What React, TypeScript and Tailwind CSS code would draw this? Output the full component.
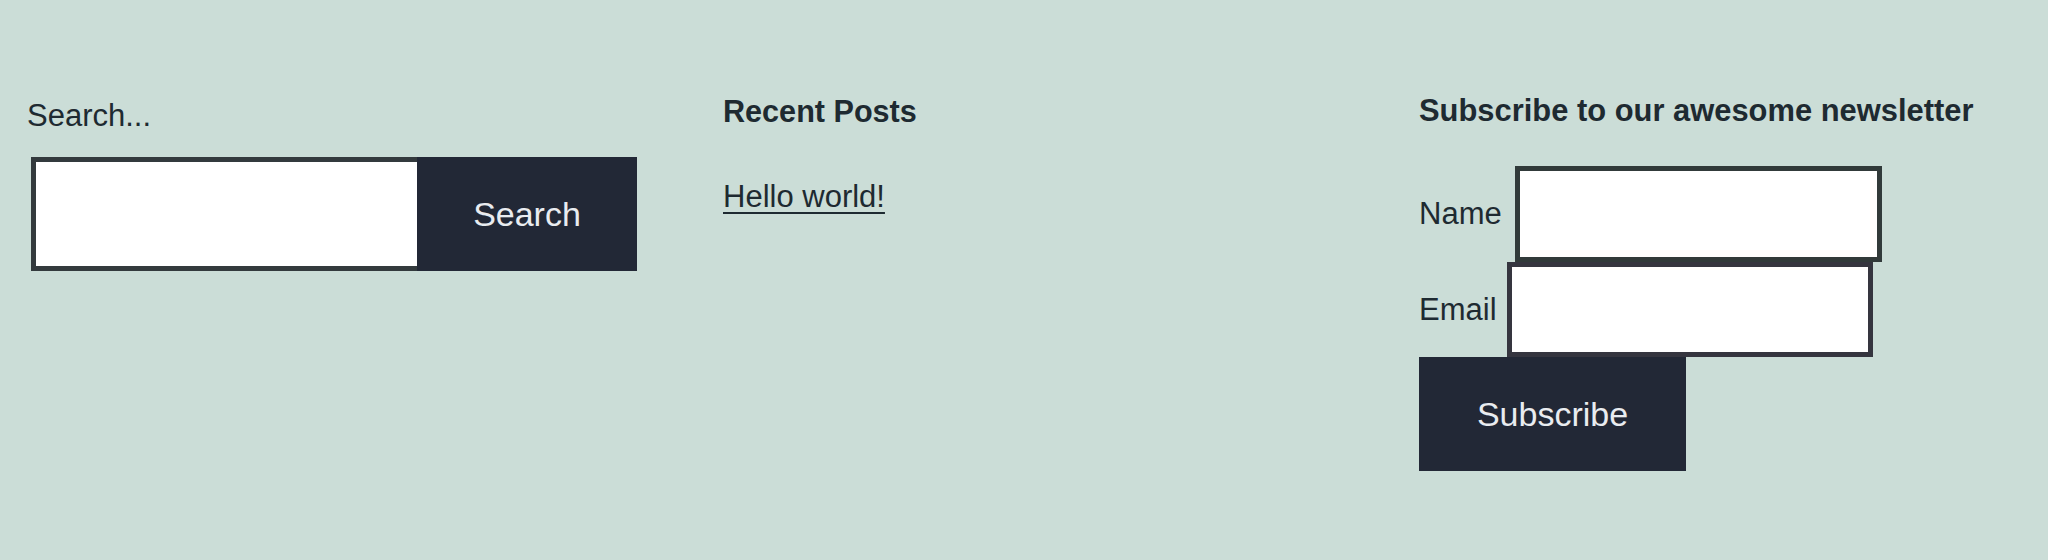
// Footer widgets: search, recent posts, newsletter signup.
import { useState } from "react";

const font = "font-['Liberation_Sans',Arial,sans-serif]";

function SearchWidget() {
  const [q, setQ] = useState("");
  return (
    <div className="flex flex-col">
      <label className="mt-[5px] text-[31px] leading-[36px] text-[#1e2a31]">Search...</label>
      <form className="ml-[4px] mt-[23px] flex h-[114px]" onSubmit={(e) => e.preventDefault()}>
        <input
          value={q}
          onChange={(e) => setQ(e.target.value)}
          className="h-full w-[386px] border-[5px] border-r-0 border-[#333a3d] bg-white px-3 text-[30px] outline-none"
        />
        <button className="flex h-full w-[220px] items-center justify-center bg-[#222836] text-[34px] text-[#e9ecf0]">
          Search
        </button>
      </form>
    </div>
  );
}

function RecentPosts() {
  return (
    <div className="flex flex-col">
      <h2 className="text-[30.6px] font-bold leading-[36px] text-[#1e2a31]">Recent Posts</h2>
      <a
        href="#"
        className="mt-[50px] self-start text-[31px] leading-[36px] text-[#1e2a31] underline decoration-2 underline-offset-[5px]"
      >
        Hello world!
      </a>
    </div>
  );
}

function Newsletter() {
  return (
    <div className="flex flex-col">
      <h2 className="text-[30.9px] font-bold leading-[36px] text-[#1e2a31]">
        Subscribe to our awesome newsletter
      </h2>
      <div className="mt-[37px] flex items-center gap-[13px]">
        <label className="text-[31px] leading-[36px] text-[#1e2a31]">Name</label>
        <input className="h-[96px] w-[367px] border-[5px] border-[#313a3a] bg-white outline-none" />
      </div>
      <div className="flex items-center gap-[10px]">
        <label className="text-[31px] leading-[36px] text-[#1e2a31]">Email</label>
        <input className="h-[95px] w-[366px] border-[5px] border-[#35353f] bg-white outline-none" />
      </div>
      <button className="flex h-[114px] w-[267px] items-center justify-center bg-[#222836] text-[34px] text-[#e9ecf0]">
        Subscribe
      </button>
    </div>
  );
}

export default function App() {
  return (
    <div className={`${font} h-[560px] w-full bg-[#cbddd7]`}>
      <div className="grid grid-cols-[696px_696px_1fr] pl-[27px] pt-[93px]">
        <SearchWidget />
        <RecentPosts />
        <Newsletter />
      </div>
    </div>
  );
}
